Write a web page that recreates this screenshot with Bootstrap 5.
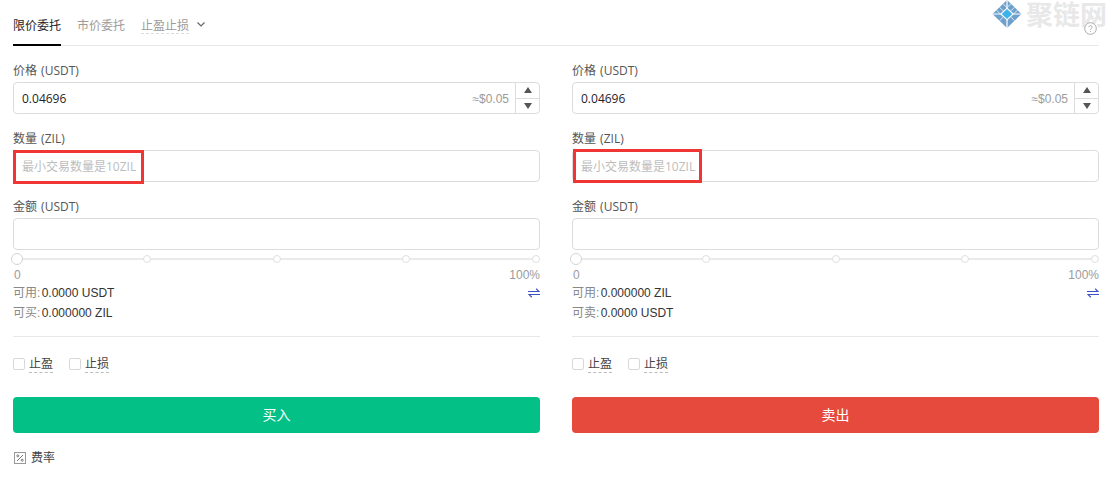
<!doctype html>
<html lang="zh">
<head>
<meta charset="utf-8">
<title>委托</title>
<link href="https://cdn.jsdelivr.net/npm/bootstrap@5.3.0/dist/css/bootstrap.min.css" rel="stylesheet">
<style>
html,body{height:492px;overflow:hidden;background:#fff}
body{font-family:"Open Sans","Noto Sans CJK SC",sans-serif;font-size:12px;color:#333;line-height:18px}
.pane{padding:0 13px;position:relative}
.tabbar{height:46px;border-bottom:1px solid #e8e8e8;gap:16px}
.tabitem{height:46px;display:flex;align-items:center;padding-top:8px;color:#9b9b9b;border-bottom:2px solid transparent;margin-bottom:-1px}
.tabitem.on{color:#1f2329;border-bottom-color:#000}
.tabitem u{text-decoration:none;border-bottom:1px dashed #dcdcdc;line-height:15px}
.chev{margin-left:8px;margin-top:-3px}
.help{position:absolute;right:15px;top:22px}
.mark-logo{position:absolute;left:992px;top:0;display:flex;align-items:center;gap:4px;white-space:nowrap;color:#e8e8e8;font-size:27px;font-weight:700;line-height:28px;font-family:"Noto Sans CJK SC",sans-serif;height:28px}
.forms{gap:32px}
.sideform{flex:1 1 0;min-width:0;padding-top:16px}
.fldlabel{height:18px;margin-bottom:2px;color:#555;line-height:18px;word-spacing:1px}
.fld{height:32px;border:1px solid #dcdcdc;border-radius:4px;margin-bottom:16px;padding-left:8px;color:#1f2329;display:flex;align-items:center;position:relative}
.fld.last{margin-bottom:0}
.fldval,.phold,.approx{padding-top:2px}
.hintbox{position:absolute;left:0;top:0;height:34px;width:131px;border:3px solid #f03535;margin:-1px 0 0 -1px}
.hintbox.alt{width:129px;margin:-2px 0 0 0}
.phold{color:#bdbdbd}
.approx{margin-left:auto;color:#9b9b9b;font-family:"Liberation Sans",sans-serif;padding-right:6px}
.spin{width:24px;height:30px;border-left:1px solid #dcdcdc;display:flex;flex-direction:column}
.spin span{flex:1;display:flex;align-items:center;justify-content:center}
.spin span+span{border-top:1px solid #dcdcdc}
.slidetrack{height:18px;position:relative;display:flex;align-items:center;justify-content:space-between}
.slidetrack::before{content:"";position:absolute;left:4px;right:4px;top:8px;height:2px;background:#eaeaea}
.dot{width:8px;height:8px;border:1px solid #e0e0e0;border-radius:50%;background:#fff;position:relative}
.dot.start{width:12px;height:12px;border-color:#d4d4d4;margin:0 -2px}
.pct{height:12px;line-height:12px;color:#9b9b9b;font-family:"Liberation Sans",sans-serif;margin-top:1px;padding:0 0 0 1px}
.avail{font-family:"Liberation Sans","Noto Sans CJK SC",sans-serif;height:20px;line-height:20px;color:#333}
.avail em{font-style:normal;color:#888;margin-right:-2px}
.firstavail{margin-top:2px}
.divline{border-top:1px solid #e8e8e8;margin:13px 0 0}
.checks{height:54px;gap:16px;margin-bottom:6px}
.boxi{width:12px;height:12px;border:1px solid #d8d8d8;border-radius:2px;margin-right:4px;display:inline-block}
.dash{border-bottom:1px dashed #bbb;line-height:16px;color:#444}
.act{height:36px;border:0;width:100%;border-radius:4px;color:#fff;font-size:14px;line-height:18px;padding:0}
.act-buy{background:#03c087}
.act-sell{background:#e64a3d}
.feeline{padding-top:13px;height:36px;color:#444;gap:5px}
.feeline svg{margin-left:1px}
.act-buy:hover{background:#03c087;color:#fff}
.act-sell:hover{background:#e64a3d;color:#fff}
</style>
</head>
<body>
<div class="pane">
  <div class="d-flex tabbar">
    <div class="tabitem on">限价委托</div>
    <div class="tabitem">市价委托</div>
    <div class="tabitem"><u>止盈止损</u><svg class="chev" width="8" height="5" viewBox="0 0 8 5"><path d="M.5.5 4 4 7.5.5" fill="none" stroke="#666" stroke-width="1.2"/></svg></div>
  </div>
  <div class="d-flex forms">
    <div class="sideform">
      <div class="fldlabel">价格 (USDT)</div>
      <div class="fld"><span class="fldval">0.04696</span><span class="approx">≈$0.05</span><div class="spin"><span><svg width="8" height="6" viewBox="0 0 8 6"><path d="M4 0 8 6H0z" fill="#555"/></svg></span><span><svg width="8" height="6" viewBox="0 0 8 6"><path d="M4 6 8 0H0z" fill="#555"/></svg></span></div></div>
      <div class="fldlabel">数量 (ZIL)</div>
      <div class="fld"><span class="phold">最小交易数量是10ZIL</span><span class="hintbox"></span></div>
      <div class="fldlabel">金额 (USDT)</div>
      <div class="fld last"></div>
      <div class="slidetrack"><span class="dot start"></span><span class="dot"></span><span class="dot"></span><span class="dot"></span><span class="dot"></span></div>
      <div class="d-flex justify-content-between pct"><span>0</span><span>100%</span></div>
      <div class="d-flex justify-content-between align-items-center avail firstavail"><span><em>可用:</em> 0.0000 USDT</span><svg width="12" height="10" viewBox="0 0 12 10"><path d="M0 3.5h11L8.2.8M12 6.5H1l2.8 2.7" fill="none" stroke="#3f51c8" stroke-width="1.2"/></svg></div>
      <div class="avail"><em>可买:</em> 0.000000 ZIL</div>
      <div class="divline"></div>
      <div class="d-flex align-items-center checks">
        <span class="d-flex align-items-center"><i class="boxi"></i><span class="dash">止盈</span></span>
        <span class="d-flex align-items-center"><i class="boxi"></i><span class="dash">止损</span></span>
      </div>
      <button class="btn act act-buy" type="button">买入</button>
      <div class="d-flex align-items-center feeline"><svg width="12" height="12" viewBox="0 0 12 12"><rect x=".5" y=".5" width="11" height="11" fill="none" stroke="#999"/><path d="M3 9 9 3" stroke="#777"/><circle cx="3.8" cy="3.8" r="1" fill="none" stroke="#777"/><circle cx="8.2" cy="8.2" r="1" fill="none" stroke="#777"/></svg>费率</div>
    </div>
    <div class="sideform">
      <div class="fldlabel">价格 (USDT)</div>
      <div class="fld"><span class="fldval">0.04696</span><span class="approx">≈$0.05</span><div class="spin"><span><svg width="8" height="6" viewBox="0 0 8 6"><path d="M4 0 8 6H0z" fill="#555"/></svg></span><span><svg width="8" height="6" viewBox="0 0 8 6"><path d="M4 6 8 0H0z" fill="#555"/></svg></span></div></div>
      <div class="fldlabel">数量 (ZIL)</div>
      <div class="fld"><span class="phold">最小交易数量是10ZIL</span><span class="hintbox alt"></span></div>
      <div class="fldlabel">金额 (USDT)</div>
      <div class="fld last"></div>
      <div class="slidetrack"><span class="dot start"></span><span class="dot"></span><span class="dot"></span><span class="dot"></span><span class="dot"></span></div>
      <div class="d-flex justify-content-between pct"><span>0</span><span>100%</span></div>
      <div class="d-flex justify-content-between align-items-center avail firstavail"><span><em>可用:</em> 0.000000 ZIL</span><svg width="12" height="10" viewBox="0 0 12 10"><path d="M0 3.5h11L8.2.8M12 6.5H1l2.8 2.7" fill="none" stroke="#3f51c8" stroke-width="1.2"/></svg></div>
      <div class="avail"><em>可卖:</em> 0.0000 USDT</div>
      <div class="divline"></div>
      <div class="d-flex align-items-center checks">
        <span class="d-flex align-items-center"><i class="boxi"></i><span class="dash">止盈</span></span>
        <span class="d-flex align-items-center"><i class="boxi"></i><span class="dash">止损</span></span>
      </div>
      <button class="btn act act-sell" type="button">卖出</button>
    </div>
  </div>
</div>
<div class="mark-logo"><svg width="30" height="28" viewBox="0 0 30 28" class="flex-shrink-0"><path d="M15 0 29.500 14 15 28 .5 14z" fill="#6f9fcb"/><path d="M15 0V8M15 20v8M.5 14H9M21 14h8.500" stroke="#fff" stroke-width="1.200"/><path d="M7.500 7.300 15 14.500 22.500 7.300M4.500 10.200 8 13.500M25.500 10.200 22 13.500M7.500 20.700 11 17.300M22.500 20.700 19 17.300M11 3.800 15 7.600 19 3.800" fill="none" stroke="#fff" stroke-opacity=".75"/><path d="M15 7.500 22 14 15 20.500 8 14z" fill="#fff"/><path d="M15 9 20.300 14 15 19 9.700 14z" fill="#3db3ea"/></svg><span>聚链网</span></div>
<svg class="help" width="13" height="13" viewBox="0 0 13 13"><circle cx="6.500" cy="6.500" r="5.800" fill="#fff" fill-opacity=".6" stroke="#aaa"/><path d="M4.900 5.200a1.600 1.600 0 1 1 2.500 1.300c-.6.400-.9.700-.9 1.300M6.500 9.200v.8" fill="none" stroke="#aaa"/></svg>
</body>
</html>
